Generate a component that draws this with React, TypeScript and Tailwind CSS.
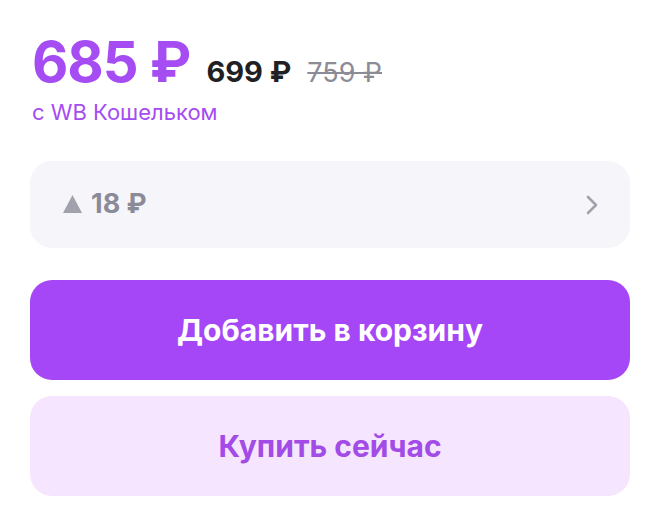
import React from "react";

function App() {
  return (
    <div className="min-h-[520px] w-[660px] bg-white px-[30px] pt-[30px] font-['Inter','Noto_Sans',sans-serif]">
      <div className="flex items-baseline gap-[14px] pl-[2px]">
        <span className="mr-[2px] text-[56px] font-bold leading-[64px] tracking-[-1px] text-[#a54cf3]">
          685 ₽
        </span>
        <span className="text-[29px] font-bold text-[#1f1f24]">699 ₽</span>
        <span className="ml-[2px] text-[27px] text-[#8c8c96] line-through decoration-[2px]">759 ₽</span>
      </div>
      <div className="mt-[4px] pl-[2px] text-[22px] leading-[28px] text-[#a54cf3]">
        с WB Кошельком
      </div>

      <div className="mt-[35px] flex h-[87px] items-center justify-between rounded-[22px] bg-[#f6f6fa] pl-[33px] pr-[30px]">
        <div className="flex items-center gap-[9px] text-[27px] font-bold text-[#8a8a99]">
          <svg width="19" height="18" viewBox="0 0 19 18" className="mt-[-1px]">
            <path d="M9.5 0 L19 18 L0 18 Z" fill="#a2a2ad" />
          </svg>
          <span>18 ₽</span>
        </div>
        <svg width="16" height="22" viewBox="0 0 16 22" fill="none">
          <path d="M4 3 L12 11 L4 19" stroke="#a2a2ad" strokeWidth="2.6" strokeLinecap="round" strokeLinejoin="round" />
        </svg>
      </div>

      <button className="mt-[32px] flex h-[100px] w-full items-center justify-center rounded-[22px] bg-[#a547f6] text-[30px] font-bold text-white">
        Добавить в корзину
      </button>
      <button className="mt-[16px] flex h-[100px] w-full items-center justify-center rounded-[22px] bg-[#f5e5fe] text-[30px] font-bold text-[#a24be6]">
        Купить сейчас
      </button>
    </div>
  );
}

export default App;
